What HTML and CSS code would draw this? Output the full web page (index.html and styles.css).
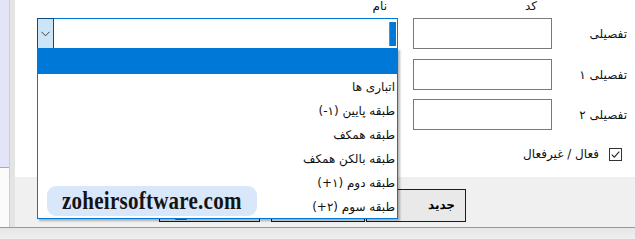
FILE: index.html
```html
<!DOCTYPE html>
<html lang="fa">
<head>
<meta charset="utf-8">
<title>فرم</title>
<link rel="stylesheet" href="styles.css">
</head>
<body>
<div class="window">
  <div class="frame">
    <div class="side"><div class="side-top"></div><div class="side-bottom"></div></div>
    <div class="gutter"></div>
    <div class="main">
      <div class="form">
        <div class="hdr">
          <div class="h-lbl"></div>
          <div class="h-code">کد</div>
          <div class="h-gap"></div>
          <div class="h-name">نام</div>
        </div>
        <div class="row">
          <div class="lbl">تفصیلی</div>
          <div class="tb"></div>
          <div class="combo">
            <div class="combo-text"><span class="sel"></span></div>
            <div class="combo-btn">
              <svg width="9" height="6" viewBox="0 0 9 6"><path d="M0.5 0.8 L4.5 4.8 L8.5 0.8" fill="none" stroke="#3c3c3c" stroke-width="1"/></svg>
            </div>
            <ul class="list">
              <li class="on">&nbsp;</li>
              <li>اتباری ها</li>
              <li>طبقه پایین (۱-)</li>
              <li>طبقه همکف</li>
              <li>طبقه بالکن همکف</li>
              <li>طبقه دوم (۱+)</li>
              <li>طبقه سوم (۲+)</li>
            </ul>
          </div>
        </div>
        <div class="row r2">
          <div class="lbl">تفصیلی ۱</div>
          <div class="tb"></div>
        </div>
        <div class="row r3">
          <div class="lbl">تفصیلی ۲</div>
          <div class="tb"></div>
        </div>
        <div class="chk-row">
          <span class="chk"><svg width="11" height="11" viewBox="0 0 11 11"><path d="M1.8 5.6 L4.3 8.1 L9.3 2.6" fill="none" stroke="#222" stroke-width="1.1"/></svg></span>
          <span class="chk-lbl">فعال / غیرفعال</span>
        </div>
      </div>
      <div class="bar">
        <div class="btn btn-new">جدید</div>
        <div class="btn btn-b"></div>
        <div class="btn btn-a"><span class="ico"></span></div>
      </div>
    </div>
  </div>
  <div class="status"></div>
  <div class="watermark"><span class="wm-text">zoheirsoftware.com</span></div>
</div>
</body>
</html>
```
FILE: styles.css
```css
html, body {
  margin: 0;
  padding: 0;
}
body {
  width: 635px;
  height: 239px;
  overflow: hidden;
  background: #ebebeb;
  font-family: "DejaVu Sans", "Noto Sans", sans-serif;
  font-size: 12px;
  color: #111;
}
.window {
  position: relative;
  display: flex;
  flex-direction: column;
  height: 239px;
}
.frame {
  display: flex;
  height: 227px;
}
.side {
  width: 9px;
  display: flex;
  flex-direction: column;
}
.side-top {
  height: 167px;
  background: #e4e4f8;
  border-bottom: 1px solid #a8a8b8;
}
.side-bottom {
  flex: 1;
  background: #fbfbfb;
}
.gutter {
  width: 5px;
  background: #e4e4e4;
  border-left: 1px solid #cdcdcd;
}
.main {
  flex: 1;
  display: flex;
  flex-direction: column;
}
.form {
  height: 177px;
  background: #fff;
  direction: rtl;
  padding-right: 8px;
  display: flex;
  flex-direction: column;
  box-sizing: border-box;
}
.hdr {
  display: flex;
  height: 18px;
  line-height: 13px;
}
.h-lbl { width: 75px; }
.h-code { width: 124px; padding-right: 15px; }
.h-gap { width: 15px; }
.h-name { width: 350px; padding-right: 11px; }
.row {
  display: flex;
  align-items: center;
  height: 31px;
}
.r2 { margin-top: 10px; }
.r3 { margin-top: 9px; }
.lbl {
  width: 75px;
  white-space: nowrap;
}
.tb {
  width: 139px;
  height: 31px;
  box-sizing: border-box;
  border: 1px solid #7a7a7a;
  background: #fff;
}
.combo {
  position: relative;
  width: 361px;
  height: 31px;
  margin-right: 15px;
  box-sizing: border-box;
  border: 1px solid #0078d7;
  display: flex;
  background: #fff;
}
.combo-text {
  flex: 1;
  display: flex;
  align-items: center;
  padding-right: 1px;
}
.sel {
  display: block;
  width: 6px;
  height: 24px;
  background: #0078d7;
  border-left: 1px solid #f7630c;
}
.combo-btn {
  width: 17px;
  height: 31px;
  margin: -1px 0 -1px -1px;
  box-sizing: border-box;
  border: 1px solid #0c4a80;
  background: #cce4f7;
  display: flex;
  align-items: center;
  justify-content: center;
}
.list {
  position: absolute;
  top: 100%;
  left: -1px;
  width: 361px;
  margin: 0;
  padding: 0;
  list-style: none;
  box-sizing: border-box;
  border: 1px solid #0078d7;
  background: #fff;
  box-shadow: 2px 2px 2px rgba(0, 0, 0, 0.28);
  z-index: 2;
}
.list li {
  height: 24px;
  line-height: 26px;
  padding-right: 2px;
  white-space: nowrap;
  color: #111;
}
.list li.on {
  height: 25px;
  background: #0078d7;
}
.chk-row {
  display: flex;
  align-items: center;
  height: 13px;
  margin-top: 18px;
  padding-right: 5px;
}
.chk {
  width: 13px;
  height: 13px;
  box-sizing: border-box;
  border: 1px solid #333;
  background: #fff;
  display: flex;
  align-items: center;
  justify-content: center;
}
.chk-lbl {
  margin-right: 10px;
  line-height: 13px;
}
.bar {
  height: 50px;
  background: #f0f0f0;
  direction: rtl;
  display: flex;
  align-items: flex-start;
  padding: 12px 169px 0 0;
  box-sizing: border-box;
}
.btn {
  height: 33px;
  box-sizing: border-box;
  border: 1px solid #1c1c1c;
  background: #e9e9e9;
}
.btn-new {
  width: 100px;
  padding-right: 10px;
  line-height: 31px;
  font-weight: bold;
  font-size: 12px;
  color: #000;
}
.btn-b {
  width: 94px;
  margin-right: 1px;
}
.btn-a {
  width: 101px;
  margin-right: 11px;
  display: flex;
  align-items: flex-end;
  padding-left: 15px;
  direction: ltr;
}
.ico {
  display: block;
  width: 12px;
  height: 4px;
  margin-bottom: 1px;
  background: #d23a3a;
  border-radius: 1px;
}
.status {
  flex: 1;
  border-top: 1px solid #9a9a9a;
  background: linear-gradient(#e6e6e6, #efefef);
}
.watermark {
  position: absolute;
  left: 47px;
  top: 186px;
  width: 210px;
  height: 30px;
  border-radius: 9px;
  background: #d9e7fb;
  z-index: 3;
  overflow: hidden;
}
.wm-text {
  display: block;
  padding-left: 15px;
  font-family: "Liberation Serif", serif;
  font-weight: bold;
  font-size: 25px;
  line-height: 30px;
  letter-spacing: 0.3px;
  color: #141414;
  transform: scaleX(0.84);
  transform-origin: 15px 50%;
  white-space: nowrap;
}
```
